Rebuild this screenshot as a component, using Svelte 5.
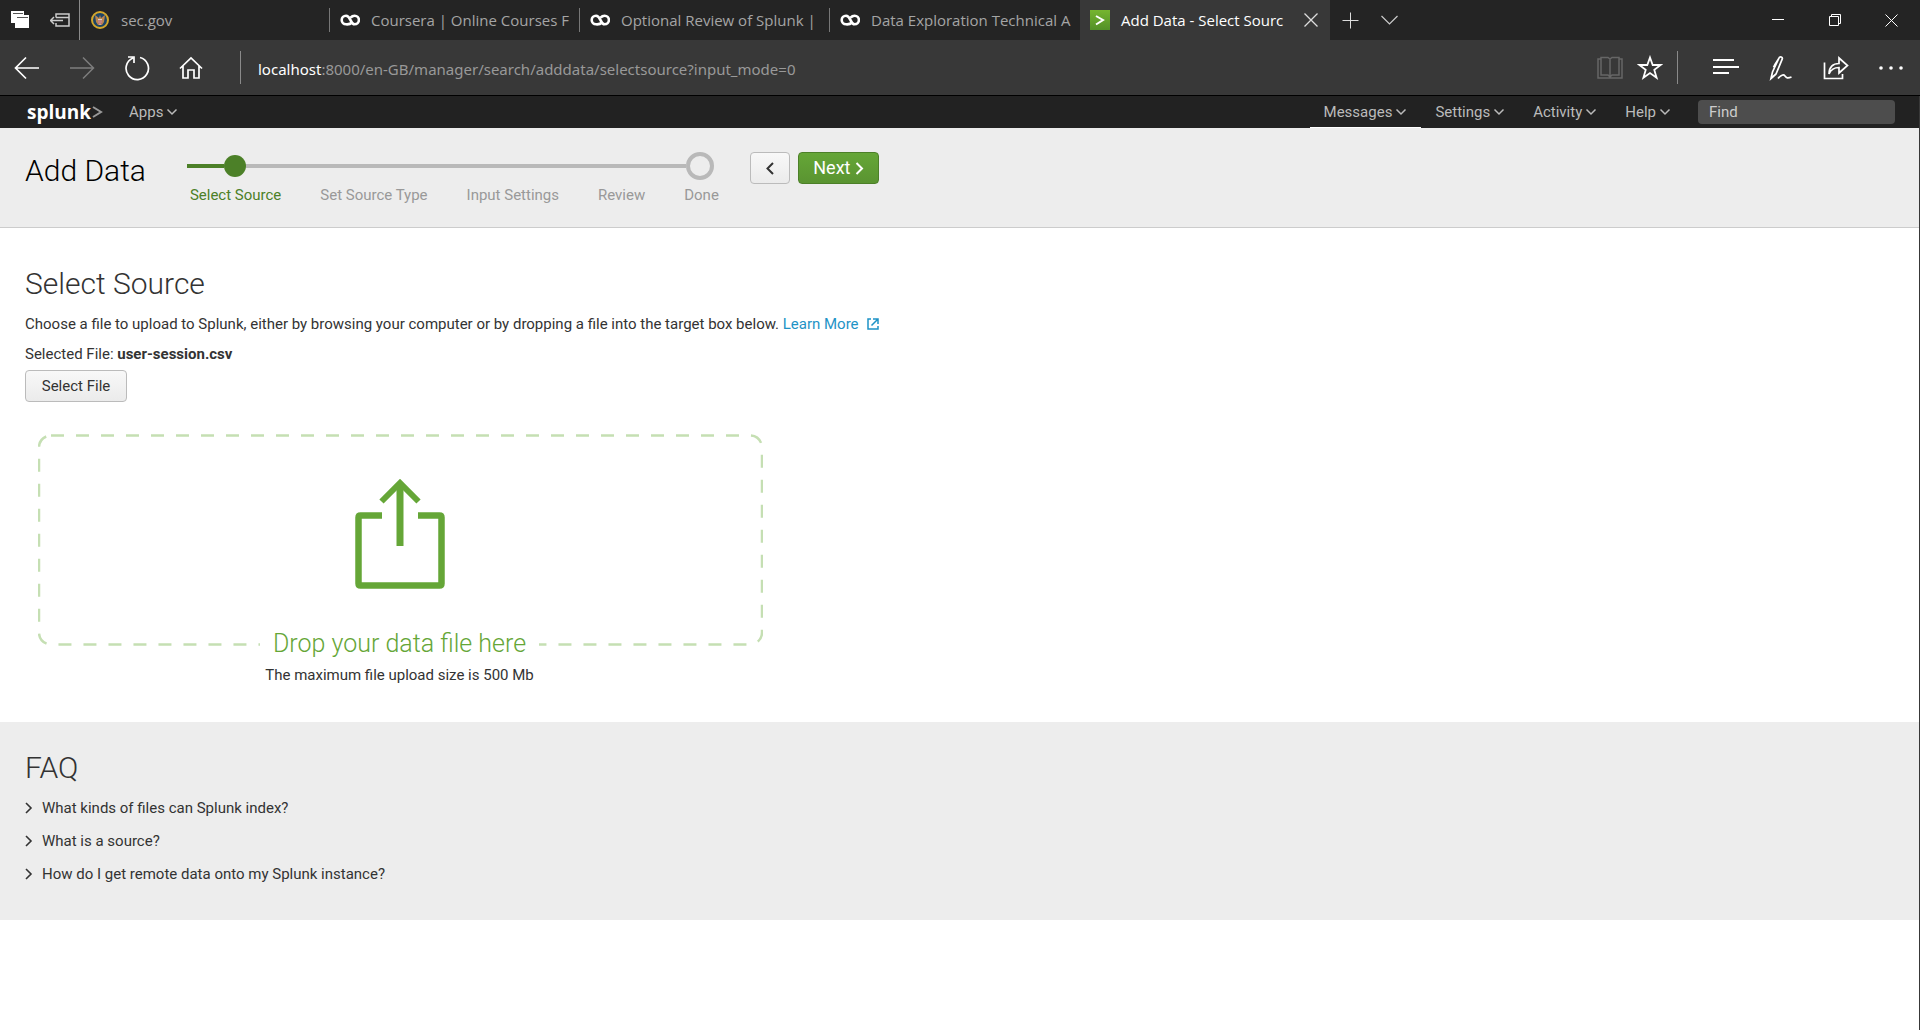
<script lang="ts">
  const tabs = [
    { title: 'sec.gov', icon: 'seal' },
    { title: 'Coursera | Online Courses F', icon: 'loop' },
    { title: 'Optional Review of Splunk |', icon: 'loop' },
    { title: 'Data Exploration Technical A', icon: 'loop' },
    { title: 'Add Data - Select Sourc', icon: 'splunk' },
  ];
  const menus = ['Messages', 'Settings', 'Activity', 'Help'];
  const steps = ['Select Source', 'Set Source Type', 'Input Settings', 'Review', 'Done'];
  const questions = [
    'What kinds of files can Splunk index?',
    'What is a source?',
    'How do I get remote data onto my Splunk instance?',
  ];
</script>

{#snippet caret()}
  <svg class="caret" width="12" height="8" viewBox="0 0 12 8"><path d="M1.5 1.5L6 6l4.500-4.500" /></svg>
{/snippet}

<div class="window">
  <div class="tabstrip">
    <div class="tools">
      <button aria-label="Tabs you've set aside">
        <svg width="20" height="20" viewBox="0 0 20 20"><path fill="#fff" d="M1 1h13v4H5v8H1z" /><path fill="#fff" d="M5 5h14v13H5z" /><path stroke="#555" d="M3 3.500h10M7 7.500h11" /></svg>
      </button>
      <button aria-label="Set these tabs aside">
        <svg width="22" height="20" viewBox="0 0 22 20" fill="none" stroke="#ccc" stroke-width="1.500"><path d="M6 7.500V4h13v12H6v-3M6 7.500h13M.5 10.500H13M4 7l-3.500 3.500L4 14" /></svg>
      </button>
    </div>
    {#each tabs as tab, i}
      <div class="tab" class:active={i === 4} class:plain={i >= 3}>
        {#if tab.icon === 'seal'}
          <svg width="20" height="20" viewBox="0 0 20 20"><circle cx="10" cy="10" r="8" fill="#1d4468" stroke="#d3a72c" stroke-width="2" /><path fill="#b9854f" d="M5 5l4 3 1-3 1 3 4-3-1 7-2 3h-4l-2-3z" /><path fill="#d8d3cc" d="M8 9h4v4l-2 2-2-2z" /><path stroke="#a33" d="M9 10v4M11 10v4" /></svg>
        {:else if tab.icon === 'loop'}
          <svg width="20" height="12" viewBox="0 0 20 12" fill="none" stroke="#fff" stroke-width="2.600"><path d="M12 8.500C10.500 10 8 10.500 6 10.300A4.300 4.300 0 0 1 6 1.700c5 0 4 8.600 8.600 8.600a4.300 4.300 0 0 0 0-8.600c-1.800 0-3 .8-4 2" /></svg>
        {:else}
          <svg width="20" height="20" viewBox="0 0 20 20"><defs><linearGradient id="fav" x2="0" y2="1"><stop stop-color="#76b52f" /><stop offset="1" stop-color="#529027" /></linearGradient></defs><path fill="url(#fav)" d="M0 0h20v20H0z" /><path fill="none" stroke="#fff" stroke-width="2" d="M6 6l7 4-7 4.500" /></svg>
        {/if}
        <span class="title">{tab.title}</span>
        {#if i === 4}
          <button aria-label="Close tab"><svg width="14" height="14" viewBox="0 0 14 14" fill="none" stroke="#ddd" stroke-width="1.300"><path d="M.5.5l13 13M13.500.5l-13 13" /></svg></button>
        {/if}
      </div>
    {/each}
    <div class="after">
      <button aria-label="New tab"><svg width="17" height="17" viewBox="0 0 17 17" stroke="#ddd"><path d="M8.500.5v16M.5 8.500h16" /></svg></button>
      <button aria-label="Tab list"><svg width="17" height="10" viewBox="0 0 17 10" fill="none" stroke="#ccc" stroke-width="1.200"><path d="M.5 1l8 8 8-8" /></svg></button>
    </div>
    <div class="controls">
      <button aria-label="Minimise"><svg width="12" height="12" viewBox="0 0 12 12" stroke="#fff"><path d="M0 5.500h12" /></svg></button>
      <button aria-label="Restore"><svg width="12" height="12" viewBox="0 0 12 12" fill="none" stroke="#fff"><path d="M.5 2.500h9v9h-9zM2.500 2V.5h9v9H10" /></svg></button>
      <button aria-label="Close"><svg width="13" height="13" viewBox="0 0 13 13" fill="none" stroke="#fff"><path d="M.5.5l12 12M12.500.5l-12 12" /></svg></button>
    </div>
  </div>

  <div class="navbar">
    <div class="history">
      <button aria-label="Back"><svg width="26" height="24" viewBox="0 0 26 24" fill="none" stroke="#fff" stroke-width="1.700"><path d="M25 12H1.500M12 1.500L1.500 12 12 22.500" /></svg></button>
      <button aria-label="Forward"><svg width="26" height="24" viewBox="0 0 26 24" fill="none" stroke="#7d7d7d" stroke-width="1.500"><path d="M1 12h23.500M14 1.500L24.500 12 14 22.500" /></svg></button>
      <button aria-label="Refresh"><svg width="26" height="26" viewBox="0 0 26 26" fill="none" stroke="#fff" stroke-width="1.700"><path d="M16 2.500A11.200 11.200 0 1 1 9 3M4 2h6v6" /></svg></button>
      <button aria-label="Home"><svg width="24" height="24" viewBox="0 0 24 24" fill="none" stroke="#fff" stroke-width="1.700"><path d="M1 12.500L12 2l11 10.500M4 10v12h5v-8h6v8h5V10" /></svg></button>
    </div>
    <div class="address"><b>localhost</b>:8000/en-GB/manager/search/adddata/selectsource?input_mode=0</div>
    <div class="page-tools">
      <button aria-label="Reading view"><svg width="26" height="24" viewBox="0 0 26 24" fill="none" stroke="#666" stroke-width="1.500"><path d="M4 3H1v19h24V3h-3M4 1.500h7l2 1.500 2-1.500h7V19h-7l-2 2-2-2H4zM13 3v18" /></svg></button>
      <button aria-label="Favourites"><svg width="26" height="25" viewBox="0 0 26 25" fill="none" stroke="#fff" stroke-width="1.800"><path d="M13 2.500l2.700 7.500h8l-6.400 4.900 2.300 7.800-6.600-4.700-6.600 4.700 2.300-7.800L2.300 10h8z" /></svg></button>
    </div>
    <div class="hub">
      <button aria-label="Hub"><svg width="26" height="20" viewBox="0 0 26 20" stroke="#fff" stroke-width="2"><path d="M0 2h21M0 9h26M0 15h16" /></svg></button>
      <button aria-label="Make a note"><svg width="24" height="26" viewBox="0 0 24 26" fill="none" stroke="#fff" stroke-width="1.700"><path d="M2 23.500L3.500 17 10 3c1-2.200 4-1 3.200 1.200L7 19zM9.500 4L6 9.500l-1.500 3M2 23.500L7 19M9 23.500c3-3.500 5.500-4.500 7-2.500s2.500 2.500 6.500 1" /></svg></button>
      <button aria-label="Share"><svg width="26" height="24" viewBox="0 0 26 24" fill="none" stroke="#fff" stroke-width="1.700"><path d="M1.500 6.500v16h18V18M6 18C6 11 10 7.500 16 7.500V2l8.500 7.500L16 17v-5.500c-5 0-8 2-10 6.500z" /></svg></button>
      <button aria-label="More"><svg width="24" height="4" viewBox="0 0 24 4" fill="#fff"><circle cx="2" cy="2" r="1.800" /><circle cx="12" cy="2" r="1.800" /><circle cx="22" cy="2" r="1.800" /></svg></button>
    </div>
  </div>

  <div class="page">
    <nav class="splunkbar">
      <a class="brand" href="#home">splunk<svg width="12" height="14" viewBox="0 0 12 14" fill="none" stroke="#999" stroke-width="2"><path d="M2 2l8 5-8 5" /></svg></a>
      <button class="menu">Apps{@render caret()}</button>
      <div class="right">
        {#each menus as menu, i}
          <button class="menu" class:open={i === 0}>{menu}{@render caret()}</button>
        {/each}
        <input class="find" type="search" placeholder="Find" aria-label="Find" />
      </div>
    </nav>

    <header class="wizard">
      <h1>Add Data</h1>
      <div class="progress">
        <div class="track">
          <span class="done-line"></span><span class="dot"></span><span class="rest-line"></span><span class="ring"></span>
        </div>
        <ol>
          {#each steps as step, i}
            <li class:current={i === 0}>{step}</li>
          {/each}
        </ol>
      </div>
      <div class="actions">
        <button class="btn back" aria-label="Previous"><svg width="8" height="13" viewBox="0 0 8 13" fill="none" stroke="#333" stroke-width="2"><path d="M7 1L1.500 6.500 7 12" /></svg></button>
        <button class="btn next">Next<svg width="9" height="13" viewBox="0 0 9 13" fill="none" stroke="#fff" stroke-width="2"><path d="M1.500 1L7 6.500 1.500 12" /></svg></button>
      </div>
    </header>

    <main>
      <h2>Select Source</h2>
      <p>
        Choose a file to upload to Splunk, either by browsing your computer or by dropping a file into the target box below.
        <a href="#learn">Learn More<svg width="12" height="12" viewBox="0 0 12 12" fill="none" stroke="#1e93c6" stroke-width="1.500"><path d="M4 1H1v10h10V8M6 1h5v5M11 1L4.500 7.500" /></svg></a>
      </p>
      <p>Selected File: <strong>user-session.csv</strong></p>
      <button class="btn select">Select File</button>

      <div class="drop">
        <svg class="outline" width="725" height="212" viewBox="0 0 725 212"><path d="M13 1.500H712a12 12 0 0 1 12 12V198.500a12 12 0 0 1-12 12H13a12 12 0 0 1-12-12V13.500a12 12 0 0 1 12-12" /></svg>
        <svg class="upload" width="90" height="110" viewBox="0 0 90 110" fill="none" stroke="#65a637"><path stroke-width="6.500" d="M27 36.500H5.500q-2 0-2 2v66q0 2 2 2h79q2 0 2-2v-66q0-2-2-2H63" /><path stroke-width="7" d="M45 67V4" /><path stroke-width="6" d="M26.500 22.500L45 4l18.500 18.500" /></svg>
        <div class="label">Drop your data file here</div>
        <div class="limit">The maximum file upload size is 500 Mb</div>
      </div>
    </main>

    <section class="faq">
      <h2>FAQ</h2>
      {#each questions as question}
        <button class="question"><svg width="8" height="12" viewBox="0 0 8 12" fill="none" stroke="#333" stroke-width="1.600"><path d="M1 1l5 5-5 5" /></svg>{question}</button>
      {/each}
    </section>
  </div>
</div>

<style>
  :global(body) { background: #fff; }
  .window { display: flex; flex-direction: column; min-height: 100vh; box-sizing: border-box; font: 15px/20px Roboto, sans-serif; color: #333; }
  .page { flex: 1; border-right: 1px solid #383838; }
  button { border: 0; padding: 0; background: none; font: inherit; color: inherit; display: flex; align-items: center; justify-content: center; cursor: pointer; }
  svg { flex: none; display: block; }
  h1, h2, p, ol { margin: 0; }

  .tabstrip { display: flex; height: 40px; background: #242424; font: 15px/20px "Open Sans", "Noto Sans", sans-serif; color: #a5a5a5; }
  .tools { box-sizing: border-box; width: 80px; display: flex; align-items: center; gap: 20px; padding-left: 10px; border-right: 1px solid #8a8a8a; }
  .tab { box-sizing: border-box; width: 250px; display: flex; align-items: center; gap: 11px; padding: 0 10px; position: relative; }
  .tab:not(.plain)::after { content: ""; position: absolute; right: 0; top: 8px; bottom: 8px; width: 1px; background: #777; }
  .title { flex: 1; min-width: 0; white-space: nowrap; }
  .active { padding-right: 12px; background: #383838; color: #fff; }
  .after { display: flex; align-items: center; gap: 22px; padding-left: 12px; }
  .controls { display: flex; margin-left: auto; }
  .controls button { width: 57px; }

  .navbar { display: flex; align-items: center; height: 55px; background: #383838; border-bottom: 1px solid #000; font: 15px/20px "Noto Sans", "Open Sans", sans-serif; }
  .history { box-sizing: border-box; height: 33px; width: 241px; display: flex; align-items: center; gap: 29px; padding-left: 14px; border-right: 1px solid #8a8a8a; }
  .address { flex: 1; padding: 2px 0 0 17px; color: #999; }
  .address b { font-weight: 400; color: #fff; }
  .page-tools { height: 33px; display: flex; align-items: center; gap: 14px; padding-right: 14px; border-right: 1px solid #8a8a8a; }
  .hub { display: flex; align-items: center; gap: 30px; padding: 0 17px 0 35px; }

  .splunkbar { display: flex; align-items: stretch; height: 32px; padding: 0 24px 0 27px; background: #222; color: #bbb; }
  .brand { display: flex; align-items: center; margin-right: 26px; color: #fff; font: 700 19px/24px "Open Sans", sans-serif; text-decoration: none; }
  .menu { gap: 3px; }
  .caret { fill: none; stroke: #bbb; stroke-width: 1.5; }
  .right { display: flex; margin-left: auto; }
  .right .menu { padding: 0 14px; border-bottom: 1px solid transparent; }
  .right .open { border-bottom-color: #fff; }
  .find { box-sizing: border-box; width: 197px; height: 24px; margin: 4px 0 0 13px; padding: 0 11px; border: 0; border-radius: 4px; background: #4d4d4d; color: #ccc; font: inherit; }
  .find::placeholder { color: #ccc; opacity: 1; }

  .wizard { display: flex; align-items: flex-start; height: 99px; padding-left: 25px; background: #ededed; border-bottom: 1px solid #ccc; }
  h1 { margin: 25px 41px 0 0; color: #000; font: 300 30px/36px Roboto, sans-serif; }
  .progress { width: 532px; margin-top: 24px; }
  .track { display: flex; align-items: center; height: 28px; }
  .done-line { width: 37px; height: 4px; background: #4c8028; }
  .dot { width: 22px; height: 22px; border-radius: 50%; background: #4c8028; }
  .rest-line { flex: 1; height: 4px; background: #b9b9b9; }
  .ring { box-sizing: border-box; width: 28px; height: 28px; margin-right: 5px; border: 4px solid #b9b9b9; border-radius: 50%; }
  ol { display: flex; justify-content: space-between; padding: 5px 0 0 3px; list-style: none; color: #999; }
  .current { color: #4c8028; }
  .actions { display: flex; gap: 8px; margin: 24px 0 0 31px; }
  .btn { box-sizing: border-box; height: 32px; border: 1px solid #bbb; border-radius: 4px; background: linear-gradient(#f8f8f8, #ebebeb); }
  .back { width: 40px; }
  .next { width: 81px; gap: 4px; border-color: #4c8028; background: linear-gradient(#65a637, #5a9431); color: #fff; font-size: 18px; }

  main { padding: 36px 25px 0; }
  h2 { font: 300 30px/40px Roboto, sans-serif; }
  main p { margin-top: 10px; }
  main a { display: inline-flex; align-items: center; gap: 8px; color: #1e93c6; text-decoration: none; }
  .select { width: 102px; margin-top: 6px; }
  .drop { position: relative; display: flex; flex-direction: column; align-items: center; width: 723px; margin: 32px 0 0 13px; padding: 45px 0 37px; }
  .outline { position: absolute; left: 0; top: 0; fill: none; stroke: #c5dfb3; stroke-width: 2.5; stroke-dasharray: 13 12; }
  .label { position: relative; margin-top: 39px; padding: 0 13px; background: #fff; color: #65a637; font: 300 25px/32px Roboto, sans-serif; }
  .limit { margin-top: 5px; }

  .faq { padding: 26px 25px 30px; background: #ededed; }
  .question { gap: 9px; height: 33px; }
  .faq h2 { margin-bottom: 3px; }
</style>
